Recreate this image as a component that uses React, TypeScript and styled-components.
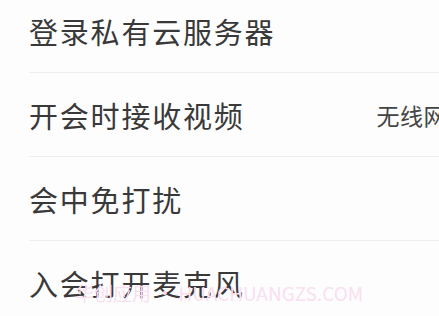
import React from 'react';
import styled, { createGlobalStyle } from 'styled-components';

const GlobalStyle = createGlobalStyle`
    html, body {
        margin: 0;
        padding: 0;
        background: #fdfdfd;
        overflow: hidden;
    }
    body {
        font-family: "Noto Sans CJK SC", "Noto Sans", sans-serif;
    }
`;

const Page = styled.div`
    position: relative;
    width: 439px;
    height: 316px;
    overflow: hidden;
    background: #fdfdfd;
`;

const List = styled.ul`
    list-style: none;
    margin: -11px 0 0 0;
    padding: 0;
    width: 530px;
`;

const Row = styled.li`
    display: flex;
    align-items: center;
    justify-content: space-between;
    height: 83px;
    margin-left: 29px;
    padding-right: 36px;
    border-bottom: 1px solid #efefef;
`;

const Label = styled.span`
    font-size: 29px;
    color: #393939;
    letter-spacing: 1.8px;
`;

const Value = styled.span`
    font-size: 23px;
    color: #444;
    letter-spacing: 0.5px;
`;

const Watermark = styled.div`
    position: absolute;
    left: 75px;
    top: 281px;
    font-family: "Noto Sans CJK SC", "Liberation Sans", sans-serif;
    font-size: 19px;
    line-height: 24px;
    color: #f9dff0;
    pointer-events: none;
    white-space: nowrap;
`;

const rows = [
    { label: '登录私有云服务器' },
    { label: '开会时接收视频', value: '无线网络下' },
    { label: '会中免打扰' },
    { label: '入会打开麦克风' },
];

export default function App() {
    return (
        <Page>
            <GlobalStyle />
            <List>
                {rows.map((row) => (
                    <Row key={row.label}>
                        <Label>{row.label}</Label>
                        {row.value && <Value>{row.value}</Value>}
                    </Row>
                ))}
            </List>
            <Watermark>华创应用 · HUACHUANGZS.COM</Watermark>
        </Page>
    );
}
